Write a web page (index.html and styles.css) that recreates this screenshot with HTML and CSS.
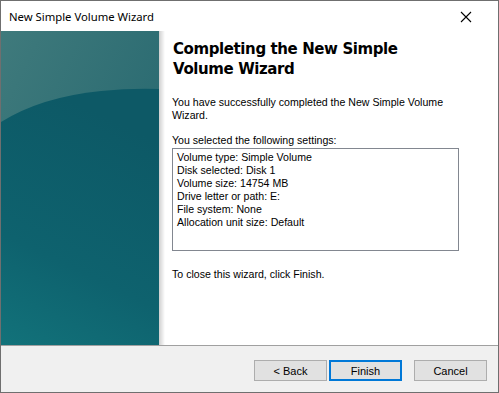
FILE: index.html
```html
<!DOCTYPE html>
<html lang="en">
<head>
    <meta charset="UTF-8">
    <title>New Simple Volume Wizard</title>
    <link rel="stylesheet" href="styles.css">
</head>
<body>

    <div class="window">
        <!-- Title bar -->
        <div class="title-bar">
            <span class="title-text">New Simple Volume Wizard</span>
            <svg class="close-icon" width="12" height="12" viewBox="0 0 12 12">
                <path d="M1 1 L11 11 M11 1 L1 11" stroke="#000" stroke-width="1.1" fill="none"/>
            </svg>
        </div>

        <!-- Wizard body -->
        <div class="wizard-body">
            <div class="side-panel">
                <svg width="158" height="314" viewBox="0 0 158 314" preserveAspectRatio="none">
                    <defs>
                        <linearGradient id="topGrad" x1="0" y1="0" x2="1" y2="1">
                            <stop offset="0" stop-color="#3f7a7c"/>
                            <stop offset="1" stop-color="#20636c"/>
                        </linearGradient>
                        <linearGradient id="lowGrad" x1="0.3" y1="0" x2="0" y2="1">
                            <stop offset="0" stop-color="#0d5966"/>
                            <stop offset="0.6" stop-color="#0e626e"/>
                            <stop offset="1" stop-color="#12727a"/>
                        </linearGradient>
                    </defs>
                    <rect width="158" height="314" fill="url(#topGrad)"/>
                    <path d="M0 91 Q 40 66 100 60 Q 130 57 158 58 L158 314 L0 314 Z" fill="url(#lowGrad)"/>
                </svg>
            </div>
            <div class="side-shadow"></div>

            <div class="content">
                <h1 class="heading">Completing the New Simple Volume Wizard</h1>
                <p class="intro">You have successfully completed the New Simple Volume Wizard.</p>
                <p class="label">You selected the following settings:</p>
                <div class="settings-box">
                    <div>Volume type: Simple Volume</div>
                    <div>Disk selected: Disk 1</div>
                    <div>Volume size: 14754 MB</div>
                    <div>Drive letter or path: E:</div>
                    <div>File system: None</div>
                    <div>Allocation unit size: Default</div>
                </div>
                <p class="closing">To close this wizard, click Finish.</p>
            </div>
        </div>

        <!-- Buttons -->
        <div class="footer">
            <button class="btn">&lt; Back</button>
            <button class="btn btn-default">Finish</button>
            <button class="btn btn-cancel">Cancel</button>
        </div>
    </div>

</body>
</html>
```

FILE: styles.css
```css
body {
    margin: 0;
    background: #ffffff;
    font-family: 'Liberation Sans', Arial, sans-serif;
}
.window {
    width: 499px;
    height: 393px;
    box-sizing: border-box;
    border: 1px solid #6f6f6f;
    display: flex;
    flex-direction: column;
    background: #ffffff;
}
.title-bar {
    height: 30px;
    display: flex;
    align-items: center;
    justify-content: space-between;
    padding: 0 26px 0 8px;
}
.title-text {
    font-family: 'Noto Sans', sans-serif;
    font-size: 11.3px;
    color: #000;
    margin-top: 1px;
}
.close-icon {
    display: block;
    margin-top: 1px;
}
.wizard-body {
    height: 314px;
    display: flex;
}
.side-panel {
    width: 158px;
    flex: none;
}
.side-panel svg {
    display: block;
}
.side-shadow {
    width: 6px;
    flex: none;
    background: linear-gradient(to right, #cfcfcf, #ffffff);
}
.content {
    padding: 8px 0 0 7px;
    width: 288px;
    font-size: 10.6px;
    color: #000;
}
.heading {
    font-family: 'DejaVu Sans', Verdana, sans-serif;
    font-weight: bold;
    font-size: 15px;
    letter-spacing: -0.4px;
    line-height: 20px;
    margin: 0 0 17px 1px;
}
.intro {
    margin: 0 0 12px 0;
    line-height: 13px;
}
.label {
    margin: 0 0 1px 0;
    line-height: 13px;
}
.settings-box {
    height: 103px;
    box-sizing: border-box;
    border: 1px solid #828790;
    padding: 2px 4px;
    line-height: 13px;
    margin-right: 1px;
}
.closing {
    margin: 17px 0 0 0;
    line-height: 13px;
}
.footer {
    flex: 1;
    border-top: 1px solid #a0a0a0;
    background: #f0f0f0;
    display: flex;
    align-items: flex-start;
    padding: 14px 0 0 253px;
}
.btn {
    width: 73px;
    height: 21px;
    box-sizing: border-box;
    background: #e1e1e1;
    border: 1px solid #adadad;
    font-family: 'Liberation Sans', Arial, sans-serif;
    font-size: 11px;
    color: #000;
    padding: 0;
    margin-right: 2px;
}
.btn-default {
    border: 2px solid #0078d7;
}
.btn-cancel {
    margin-left: 10px;
}
```
